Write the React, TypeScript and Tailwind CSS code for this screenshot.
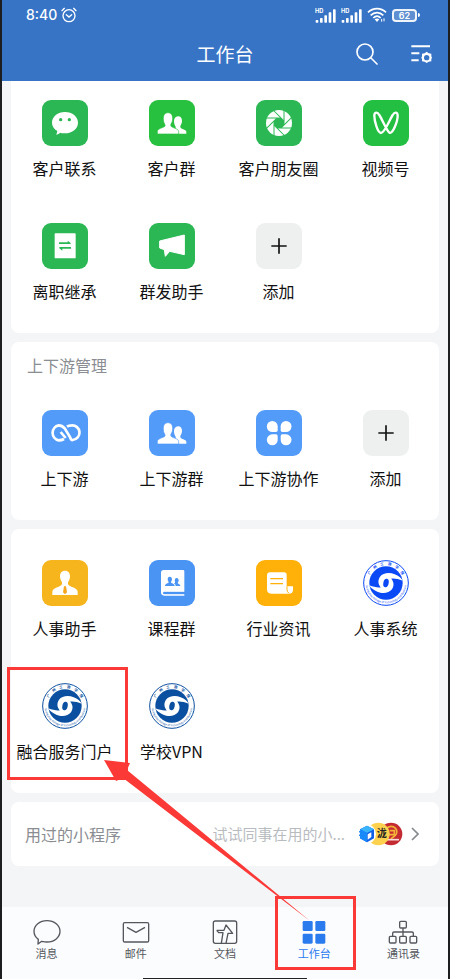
import type { ReactNode } from "react";

const GREEN = "#2cb755";
const BLUE = "#539bf8";

interface AppItem {
  label: string;
  icon: ReactNode;
  marked?: boolean;
}

interface TileProps {
  color: string;
  children: ReactNode;
}

function Tile({ color, children }: TileProps) {
  return (
    <svg viewBox="0 0 138 138" className="size-[46px]" fill="#fff" aria-hidden="true">
      <rect width="138" height="138" rx="27" fill={color} />
      {children}
    </svg>
  );
}

function ChatIcon() {
  return (
    <Tile color={GREEN}>
      <path d="M69 36c22 0 39 14 39 32s-17 32-39 32c-5 0-9 0-13-2l-13 7 3-12c-10-6-16-14-16-25 0-18 17-32 39-32Z" />
      <circle cx="56" cy="59" r="5" fill={GREEN} />
      <circle cx="82" cy="59" r="5" fill={GREEN} />
    </Tile>
  );
}

function PeopleIcon({ color }: { color: string }) {
  return (
    <Tile color={color}>
      <path d="M87 49c8 0 12 6 12 14 0 6-3 11-5 15-1 4 1 6 5 8 8 3 13 5 13 9v6H80V80c-3-4-5-10-5-16 0-8 4-15 12-15Z" />
      <path
        d="M57 38c10 0 14 7 14 17 0 7-2 13-5 17-2 5 0 8 5 10 11 4 18 7 18 13v7H25v-7c0-6 6-9 17-13 6-2 8-5 5-10-3-4-4-10-4-17 0-10 4-17 14-17Z"
        stroke={color}
        strokeWidth="2"
      />
    </Tile>
  );
}

function MomentsIcon() {
  const blades = [0, 45, 90, 135, 180, 225, 270, 315];
  return (
    <Tile color={GREEN}>
      <circle cx="69" cy="69" r="39" />
      <path d="M63 54h12l9 9v12l-9 9H63l-9-9V63Z" fill={GREEN} />
      {blades.map((deg) => (
        <path
          key={deg}
          d="M75 54H31"
          stroke={GREEN}
          strokeWidth="3"
          transform={`rotate(${deg} 69 69)`}
        />
      ))}
    </Tile>
  );
}

function ChannelsIcon() {
  return (
    <Tile color="#22bf42">
      <path
        d="M54 99C43 99 34 60 34 47c0-11 9-12 15-2 9 14 22 47 30 53 11 6 25-36 25-51 0-11-9-12-15-2-9 14-24 54-35 54Z"
        fill="none"
        stroke="#fff"
        strokeWidth="7"
      />
    </Tile>
  );
}

function HandoverIcon() {
  return (
    <Tile color={GREEN}>
      <rect x="38" y="31" width="63" height="75" rx="2" />
      <path d="M51 58h26v-5l9 7v3H51ZM87 77H61v6l-9-7v-4h35Z" fill={GREEN} />
    </Tile>
  );
}

function MegaphoneIcon() {
  return (
    <Tile color={GREEN}>
      <path
        d="m32 54 74-18v59l-44-10-13 15-3-20-14-5Z"
        stroke="#fff"
        strokeWidth="3"
        strokeLinejoin="round"
      />
    </Tile>
  );
}

function AddIcon() {
  return (
    <Tile color="#eef0f0">
      <path d="M69 46v46M46 69h46" stroke="#111" strokeWidth="5" />
    </Tile>
  );
}

function ChainIcon() {
  return (
    <Tile color={BLUE}>
      <path
        d="M66 87C61 90 56 91 50 91A23 23 0 0 1 50 46C58 46 63 49 68 55L84 81C86 87 88 91 92 90A22 22 0 0 0 89 46C84 46 79 47 75 50M56 66L71 84"
        fill="none"
        stroke="#fff"
        strokeWidth="8"
      />
    </Tile>
  );
}

function CollaborateIcon() {
  return (
    <Tile color={BLUE}>
      <path d="M49 33a16 16 0 0 1 16 16v12q0 5-5 5H49a16 16 0 0 1 0-33Z" />
      <path d="M90 33a16 16 0 0 0-16 16v12q0 5 5 5h11a16 16 0 0 0 0-33Z" />
      <path d="M49 106a16 16 0 0 0 16-16V78q0-5-5-5H49a16 16 0 0 0 0 33Z" />
      <path d="M90 106a16 16 0 0 1-16-16V78q0-5 5-5h11a16 16 0 0 1 0 33Z" />
    </Tile>
  );
}

function HrIcon() {
  return (
    <Tile color="#f6b41d">
      <path d="M69 32c10 0 15 7 15 17 0 8-3 13-6 18-1 8 2 10 10 13 12 4 19 8 19 15v10H31V95c0-7 7-11 19-15 8-3 11-5 10-13-3-5-6-10-6-18 0-10 5-17 15-17Z" />
      <path d="M66 79h6l3 18-6 6-6-6Z" fill="#f6a51d" />
    </Tile>
  );
}

function CourseIcon() {
  return (
    <Tile color="#4a94f3">
      <path d="M44 30h58q4 0 4 4v73H46q-10 0-10-10V38q0-8 8-8Z" />
      <path d="M108 96H46q-4 0-4 3t4 3h62" stroke="#4a94f3" strokeWidth="1" fill="#4a94f3" />
      <g fill="#4a94f3">
        <path d="M62 50c5 0 7 4 7 8s-2 6-3 9c0 4 11 3 11 11H48c0-8 11-7 11-11-1-3-3-5-3-9s2-8 6-8Z" />
        <path d="M83 54c4 0 6 3 6 7s-2 5-3 8c0 3 8 3 8 9H80c0-5-3-6-5-8 3-1 4-3 3-5-2-5 0-11 5-11Z" />
      </g>
    </Tile>
  );
}

function NewsIcon() {
  return (
    <Tile color="#ffb10a">
      <path d="M42 37h42q8 0 8 8v34h19v10q0 12-12 12H46q-13 0-13-13V46q0-9 9-9Z" />
      <path d="M43 56h38M43 71h38" stroke="#ffb10a" strokeWidth="4" />
      <path d="M93 79v9q0 8 6 12" fill="none" stroke="#ffb10a" strokeWidth="3" />
    </Tile>
  );
}

function SchoolSeal({ color, id }: { color: string; id: string }) {
  const swirl = "M62 89C46 79 42 63 51 50c9-12 29-14 44-7 12 5 20 11 24 19-13-5-26-8-35-6-14 4-22 16-22 33Z";
  return (
    <svg viewBox="0 0 138 138" className="size-[46px]" aria-hidden="true">
      <circle cx="69" cy="69" r="67" fill="#fff" stroke={color} strokeWidth="3" />
      <circle cx="69" cy="69" r="50" fill={color} />
      <path id={`${id}-top`} d="M15 69a54 54 0 0 1 108 0" fill="none" />
      <path id={`${id}-bottom`} d="M8 69a61 61 0 0 0 122 0" fill="none" />
      <text fontSize="11" fontWeight="700" fill={color} textAnchor="middle">
        <textPath href={`#${id}-top`} startOffset="50%">广　州　工　商　学　院</textPath>
      </text>
      <text fontSize="8" fill={color} textAnchor="middle">
        <textPath href={`#${id}-bottom`} startOffset="50%">Guangzhou College of Technology and Business</textPath>
      </text>
      <path fill="#fff" d={swirl} />
      <path fill="#fff" d={swirl} transform="rotate(180 69 69)" />
      <ellipse cx="69" cy="69" rx="8" ry="13" fill={color} transform="rotate(12 69 69)" />
    </svg>
  );
}

const customerApps: AppItem[] = [
  { label: "客户联系", icon: <ChatIcon /> },
  { label: "客户群", icon: <PeopleIcon color="#28c03f" /> },
  { label: "客户朋友圈", icon: <MomentsIcon /> },
  { label: "视频号", icon: <ChannelsIcon /> },
  { label: "离职继承", icon: <HandoverIcon /> },
  { label: "群发助手", icon: <MegaphoneIcon /> },
  { label: "添加", icon: <AddIcon /> },
];

const chainApps: AppItem[] = [
  { label: "上下游", icon: <ChainIcon /> },
  { label: "上下游群", icon: <PeopleIcon color={BLUE} /> },
  { label: "上下游协作", icon: <CollaborateIcon /> },
  { label: "添加", icon: <AddIcon /> },
];

const schoolApps: AppItem[] = [
  { label: "人事助手", icon: <HrIcon /> },
  { label: "课程群", icon: <CourseIcon /> },
  { label: "行业资讯", icon: <NewsIcon /> },
  { label: "人事系统", icon: <SchoolSeal color="#0a49f5" id="hr" /> },
  { label: "融合服务门户", icon: <SchoolSeal color="#0b4fa0" id="portal" />, marked: true },
  { label: "学校VPN", icon: <SchoolSeal color="#0b4fa0" id="vpn" /> },
];

function AppGrid({ items }: { items: AppItem[] }) {
  return (
    <div className="grid grid-cols-4 gap-y-[43px]">
      {items.map((item) => (
        <button
          key={item.label}
          type="button"
          className="relative flex flex-col items-center gap-[10px] whitespace-nowrap text-base leading-6 text-[#111]"
        >
          {item.icon}
          {item.label}
          {item.marked && (
            <span className="absolute -top-4 -right-[10px] -bottom-[17px] -left-1 border-3 border-[#fb3a37]" />
          )}
        </button>
      ))}
    </div>
  );
}

function Signal() {
  return (
    <svg viewBox="0 0 63 45" className="h-[15px] w-[21px]" fill="#fff" aria-hidden="true">
      <text x="0" y="15" fontSize="17" fontWeight="700" fontFamily="Inter, sans-serif">HD</text>
      <rect x="2" y="36" width="8" height="8" rx="2" />
      <rect x="15" y="30" width="8" height="14" rx="2" />
      <rect x="28" y="22" width="8" height="22" rx="2" />
      <rect x="41" y="13" width="8" height="31" rx="2" />
      <rect x="54" y="4" width="8" height="40" rx="2" />
    </svg>
  );
}

function StatusBar() {
  return (
    <div className="flex h-[30px] items-center justify-between pr-7 pl-6 font-['Inter','Noto_Sans_CJK_SC',sans-serif] text-white">
      <div className="flex items-center gap-1 text-sm font-medium">
        8:40
        <svg viewBox="0 0 48 48" className="size-4" fill="none" stroke="#fff" strokeWidth="4" strokeLinecap="round" aria-hidden="true">
          <circle cx="24" cy="26" r="18" />
          <path d="m16 23 8 7 8-7M3 11l7-7M45 11l-7-7" />
        </svg>
      </div>
      <div className="flex items-center gap-[5px]">
        <Signal />
        <Signal />
        <svg viewBox="0 0 60 48" className="h-4 w-5" fill="none" stroke="#fff" strokeWidth="5" aria-hidden="true">
          <path d="M3 16C18 1 42 1 57 16M11 25c11-11 27-11 38 0M19 33c7-7 15-7 22 0" />
          <path d="m23 37 7 8 7-8q-7-5-14 0Z" fill="#fff" stroke="none" />
          <path d="M44 36v8M51 34v9" strokeWidth="3" />
        </svg>
        <div className="flex items-center gap-px">
          <span className="flex h-[13px] w-[25px] items-center justify-center rounded border-2 border-white/90 bg-white/20 text-[9px] leading-none font-semibold">
            62
          </span>
          <span className="h-1 w-0.5 rounded-r bg-white" />
        </div>
      </div>
    </div>
  );
}

function TopBar() {
  return (
    <header className="bg-[#3874c6] text-white">
      <StatusBar />
      <div className="grid h-[51px] grid-cols-3 items-center px-4 pb-1">
        <h1 className="col-start-2 text-center text-[19px] leading-7">工作台</h1>
        <div className="flex items-center justify-end gap-[33px]">
          <button type="button" aria-label="搜索">
            <svg viewBox="0 0 66 66" className="size-[22px]" fill="none" stroke="#fff" strokeWidth="5" strokeLinecap="round">
              <circle cx="27" cy="27" r="24" />
              <path d="m45 45 18 18" />
            </svg>
          </button>
          <button type="button" aria-label="设置">
            <svg viewBox="0 0 63 54" className="h-[18px] w-[21px]" fill="none" stroke="#fff" strokeWidth="6">
              <path d="M1 4h56M1 25h24M1 46h22" />
              <path d="m47 20 6 5 8 1v8l2 4-2 4v7l-8 1-6 4-6-4-8-1v-7l-2-4 2-4v-8l8-1Z" fill="#fff" stroke="none" />
              <circle cx="47" cy="38" r="8" fill="#3874c6" stroke="none" />
            </svg>
          </button>
        </div>
      </div>
    </header>
  );
}

function MiniPrograms() {
  return (
    <button
      type="button"
      className="flex h-16 w-full items-center rounded-lg bg-white pr-5 pl-[14px] text-left"
    >
      <span className="text-base leading-6 text-[#8a8d91]">用过的小程序</span>
      <span className="ml-auto text-[15px] leading-6 text-[#b9bcbf]">试试同事在用的小...</span>
      <svg viewBox="0 0 132 72" className="ml-[14px] h-6 w-11" aria-hidden="true">
        <circle cx="96" cy="36" r="34" fill="#c32a31" />
        <path d="M84 18c14-12 34 0 28 18-4 10-14 8-16 16M92 26h14v12H90" fill="none" stroke="#f3b338" strokeWidth="5" />
        <path d="M82 53h38" stroke="#f8dcdc" strokeWidth="5" />
        <circle cx="58" cy="36" r="34" fill="#fed14e" />
        <text x="68" y="46" fontSize="30" fontWeight="700" textAnchor="middle" fill="#222">泷</text>
        <circle cx="20" cy="36" r="31" fill="#fff" />
        <path d="m24 11 21 11v27L24 61 3 49v-6l-3-3 3-3v-5l-3-3 3-3v-4Z" fill="#0f5fe8" />
        <path d="m24 11 21 11-21 11L3 22Z" fill="#39b4fb" />
        <path d="M24 33v28L3 49v-6l-3-3 3-3v-5l-3-3 3-3v-4Z" fill="#1789f8" />
        <path d="m26 37 11-6v14l-11 8Z" fill="#fff" />
      </svg>
      <svg viewBox="0 0 24 42" className="ml-2 h-[14px] w-2" fill="none" stroke="#85888c" strokeWidth="5" aria-hidden="true">
        <path d="m3 3 18 18L3 39" />
      </svg>
    </button>
  );
}

const iconClass = "h-[26px] w-[30px]";

const tabs = [
  {
    label: "消息",
    icon: (
      <svg viewBox="0 0 90 78" className={iconClass} fill="none" stroke="currentColor" strokeWidth="4" strokeLinejoin="round">
        <path d="M45 5c22 0 39 14 39 32S67 69 45 69c-6 0-11-1-16-2l-11 8 1-14C10 55 6 47 6 37 6 19 23 5 45 5Z" />
      </svg>
    ),
  },
  {
    label: "邮件",
    icon: (
      <svg viewBox="0 0 90 78" className={iconClass} fill="none" stroke="currentColor" strokeWidth="4" strokeLinejoin="round">
        <rect x="7" y="11" width="76" height="58" rx="4" />
        <path d="m18 25 27 15 27-15" />
      </svg>
    ),
  },
  {
    label: "文档",
    icon: (
      <svg viewBox="0 0 90 78" className={iconClass} fill="none" stroke="currentColor" strokeWidth="4" strokeLinejoin="round">
        <rect x="10" y="6" width="70" height="67" rx="6" />
        <path d="M20 34h22l6-16 20 25H54l-6 30M20 34l6 7h13l-5 32" />
      </svg>
    ),
  },
  {
    label: "工作台",
    active: true,
    icon: (
      <svg viewBox="0 0 90 78" className={iconClass} fill="currentColor">
        <rect x="11" y="6" width="30" height="30" rx="4" />
        <rect x="49" y="6" width="30" height="30" rx="4" />
        <rect x="11" y="44" width="30" height="30" rx="4" />
        <rect x="49" y="44" width="30" height="30" rx="4" />
      </svg>
    ),
  },
  {
    label: "通讯录",
    icon: (
      <svg viewBox="0 0 90 78" className={iconClass} fill="none" stroke="currentColor" strokeWidth="4">
        <rect x="35" y="7" width="20" height="20" rx="3" />
        <rect x="4" y="52" width="20" height="20" rx="3" />
        <rect x="35" y="52" width="20" height="20" rx="3" />
        <rect x="66" y="52" width="20" height="20" rx="3" />
        <path d="M45 27v25M14 52V43q0-4 4-4h54q4 0 4 4v9" />
      </svg>
    ),
  },
];

function TabBar() {
  return (
    <nav className="mt-auto bg-[#fbfcfe]">
      <div className="grid h-[71px] grid-cols-5">
        {tabs.map((tab) => (
          <button
            key={tab.label}
            type="button"
            className={
              tab.active
                ? "relative flex flex-col items-center pt-3 text-[11px] leading-4 text-[#2a7bee]"
                : "relative flex flex-col items-center pt-3 text-[11px] leading-4 text-[#54575c]"
            }
          >
            {tab.icon}
            {tab.label}
            {tab.active && (
              <span className="absolute -top-[11px] right-[3px] bottom-2 left-[5px] border-3 border-[#fb3a37]" />
            )}
          </button>
        ))}
      </div>
      <div className="mx-auto h-px w-[164px] bg-[#222]" />
    </nav>
  );
}

export default function App() {
  return (
    <div className="relative flex min-h-screen flex-col border-x-2 border-[#1d1e20] bg-[#f4f5f7] font-['Noto_Sans_CJK_SC',sans-serif]">
      <TopBar />
      <main className="flex flex-col gap-[9px] px-[9px] pb-10">
        <section className="rounded-b-lg bg-white pt-[19px] pb-[30px]">
          <AppGrid items={customerApps} />
        </section>
        <section className="rounded-lg bg-white pt-[11px] pb-[30px]">
          <h2 className="mb-[33px] px-4 text-base leading-6 text-[#8a8d91]">上下游管理</h2>
          <AppGrid items={chainApps} />
        </section>
        <section className="rounded-lg bg-white pt-[31px] pb-[30px]">
          <AppGrid items={schoolApps} />
        </section>
        <MiniPrograms />
      </main>
      <TabBar />
      <svg
        viewBox="0 0 210 164"
        className="pointer-events-none absolute top-[759px] left-[101px] h-[164px] w-[210px]"
        fill="#fb3a37"
        aria-hidden="true"
      >
        <path d="m1 1 26 3-3 7 183 151L20 19l-7 3Z" />
      </svg>
    </div>
  );
}
